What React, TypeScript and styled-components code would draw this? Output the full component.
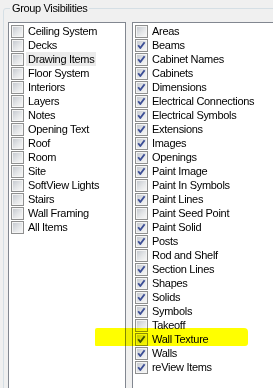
import React, { FC } from 'react'
import styled, { createGlobalStyle } from 'styled-components'

const GlobalStyle = createGlobalStyle`
  html, body {
    margin: 0;
    padding: 0;
    background: #f0f0f0;
    overflow: hidden;
  }
  body {
    font-family: 'Liberation Sans', Arial, sans-serif;
    font-size: 11px;
    color: #000;
  }
`

const Page = styled.div`
  position: relative;
  width: 273px;
  height: 388px;
  overflow: hidden;
`

const GroupBox = styled.fieldset`
  margin: 2px 0 0 3px;
  padding: 7px 0 0 4px;
  width: 300px;
  height: 420px;
  border: 1px solid #d5dfe5;
  border-radius: 3px;
  box-sizing: border-box;
  display: flex;
  gap: 6px;
  align-items: flex-start;
`

const Legend = styled.legend`
  margin-left: 2px;
  padding: 0 2px;
  line-height: 13px;
  letter-spacing: -0.35px;
`

const ListBox = styled.div<{ $width: number }>`
  width: ${(p) => p.$width}px;
  height: 380px;
  flex: none;
  box-sizing: border-box;
  background: #fff;
  border: 1px solid #828790;
  padding: 1px 0 0 2px;
  display: flex;
  flex-direction: column;
`

const Row = styled.div`
  height: 14px;
  display: flex;
  align-items: center;
  gap: 2px;
  white-space: nowrap;
`

const Label = styled.span<{ $selected?: boolean }>`
  padding: 0 2px;
  line-height: 14px;
  letter-spacing: -0.3px;
  background: ${(p) => (p.$selected ? '#ebebeb' : 'transparent')};
`

const Box = styled.span`
  width: 13px;
  height: 13px;
  flex: none;
  box-sizing: border-box;
  border: 1px solid #8e8f8f;
  padding: 1px;
  background: #f4f4f4;
  position: relative;
`

const BoxInner = styled.span`
  display: block;
  width: 9px;
  height: 9px;
  background: linear-gradient(135deg, #c6cad0 0%, #e4e6e8 55%, #f6f6f6 100%);
`

const Tick = styled.svg`
  position: absolute;
  left: 0;
  top: 0;
`

const Highlighter = styled.div`
  position: absolute;
  left: 95px;
  top: 328px;
  width: 153px;
  height: 18px;
  background: #ffff00;
  mix-blend-mode: multiply;
  border-radius: 2px 4px 3px 1px;
  filter: blur(0.6px);
`

const CheckBox: FC<{ checked: boolean }> = ({ checked }) => (
  <Box>
    <BoxInner />
    {checked && (
      <Tick width='11' height='11' viewBox='0 0 11 11'>
        <path d='M2.2 5.2 L4.3 8 L8.6 2.2' fill='none' stroke='#3d4f96' strokeWidth='1.9' strokeLinejoin='round' />
      </Tick>
    )}
  </Box>
)

const leftItems = [
  'Ceiling System',
  'Decks',
  'Drawing Items',
  'Floor System',
  'Interiors',
  'Layers',
  'Notes',
  'Opening Text',
  'Roof',
  'Room',
  'Site',
  'SoftView Lights',
  'Stairs',
  'Wall Framing',
  'All Items',
]

const rightItems: [string, boolean][] = [
  ['Areas', false],
  ['Beams', true],
  ['Cabinet Names', true],
  ['Cabinets', true],
  ['Dimensions', true],
  ['Electrical Connections', true],
  ['Electrical Symbols', true],
  ['Extensions', true],
  ['Images', true],
  ['Openings', true],
  ['Paint Image', true],
  ['Paint In Symbols', false],
  ['Paint Lines', true],
  ['Paint Seed Point', false],
  ['Paint Solid', true],
  ['Posts', true],
  ['Rod and Shelf', false],
  ['Section Lines', true],
  ['Shapes', true],
  ['Solids', true],
  ['Symbols', true],
  ['Takeoff', false],
  ['Wall Texture', true],
  ['Walls', true],
  ['reView Items', true],
]

const App: FC = () => {
  return (
    <Page>
      <GlobalStyle />
      <GroupBox>
        <Legend>Group Visibilities</Legend>
        <ListBox $width={118}>
          {leftItems.map((name) => (
            <Row key={name}>
              <CheckBox checked={false} />
              <Label $selected={name === 'Drawing Items'}>{name}</Label>
            </Row>
          ))}
        </ListBox>
        <ListBox $width={160}>
          {rightItems.map(([name, checked]) => (
            <Row key={name}>
              <CheckBox checked={checked} />
              <Label>{name}</Label>
            </Row>
          ))}
        </ListBox>
      </GroupBox>
      <Highlighter />
    </Page>
  )
}

export default App
